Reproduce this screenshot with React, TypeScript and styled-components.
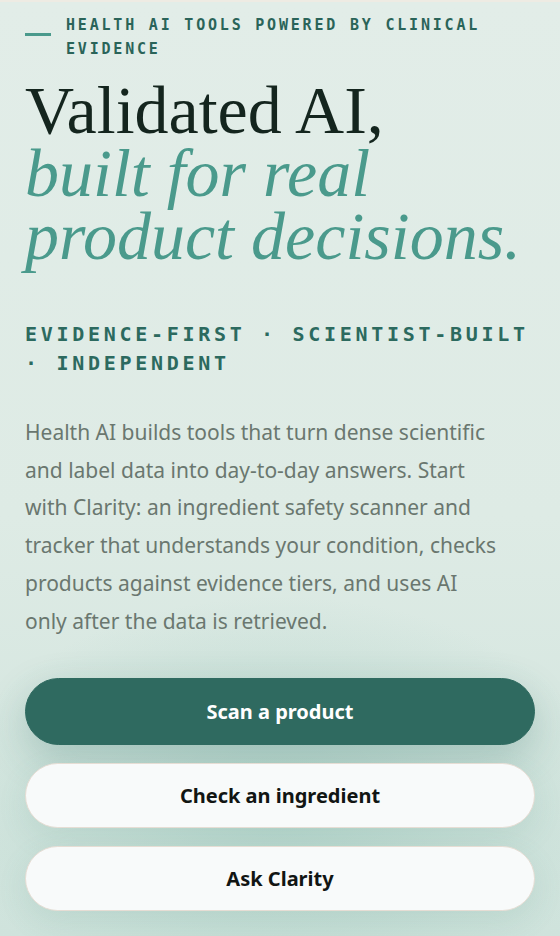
import React from 'react'
import styled, { createGlobalStyle } from 'styled-components'

const GlobalStyle = createGlobalStyle`
  html, body {
    margin: 0;
    padding: 0;
  }
  body {
    background: #e1ede7;
    font-family: 'Noto Sans', 'Liberation Sans', sans-serif;
  }
`

const App = () => {
	return (
		<>
			<GlobalStyle />
			<Page>
				<Eyebrow>
					<EyebrowLine />
					<EyebrowText>Health AI tools powered by clinical evidence</EyebrowText>
				</Eyebrow>

				<Title>
					Validated AI,
					<TitleAccent>built for real product decisions.</TitleAccent>
				</Title>

				<Tagline>Evidence-first · Scientist-built · Independent</Tagline>

				<Lead>
					Health AI builds tools that turn dense scientific and label data into day-to-day answers.
					Start with Clarity: an ingredient safety scanner and tracker that understands your
					condition, checks products against evidence tiers, and uses AI only after the data is
					retrieved.
				</Lead>

				<Actions>
					<Button $primary>Scan a product</Button>
					<Button>Check an ingredient</Button>
					<Button>Ask Clarity</Button>
				</Actions>
			</Page>
		</>
	)
}

export default App

const Page = styled.main`
  min-height: 936px;
  box-sizing: border-box;
  border-top: 2px solid #eeebe3;
  padding: 11px 25px 0;
  background:
    radial-gradient(ellipse 85% 32% at 50% 86%, rgba(120, 180, 165, 0.32), transparent 70%),
    linear-gradient(180deg, #e2ede8 0%, #deebe5 55%, #cfe3dc 100%);
`

const Eyebrow = styled.div`
  display: flex;
  align-items: flex-start;
  gap: 15px;
`

const EyebrowLine = styled.span`
  flex: none;
  width: 26px;
  height: 3px;
  margin-top: 20px;
  background: #4a9a8c;
`

const EyebrowText = styled.p`
  margin: 0;
  font-family: 'DejaVu Sans Mono', 'Liberation Mono', monospace;
  font-weight: 700;
  font-size: 15px;
  line-height: 24px;
  letter-spacing: 2.8px;
  text-transform: uppercase;
  color: #2a6459;
`

const Title = styled.h1`
  margin: 18px 0 0;
  font-family: 'Liberation Serif', 'DejaVu Serif', serif;
  font-weight: 400;
  font-size: 68px;
  line-height: 63px;
  color: #14251e;
`

const TitleAccent = styled.em`
  display: block;
  font-style: italic;
  color: #4a9a8c;
`

const Tagline = styled.p`
  margin: 52px 0 0;
  font-family: 'DejaVu Sans Mono', 'Liberation Mono', monospace;
  font-weight: 700;
  font-size: 20px;
  line-height: 29px;
  letter-spacing: 3.7px;
  text-transform: uppercase;
  color: #2c6a5f;
`

const Lead = styled.p`
  max-width: 475px;
  margin: 36px 0 0;
  font-size: 21px;
  line-height: 37.7px;
  color: #6a776f;
`

const Actions = styled.div`
  display: flex;
  flex-direction: column;
  gap: 18px;
  margin-top: 38px;
`

const Button = styled.button<{ $primary?: boolean }>`
  height: ${p => (p.$primary ? '67px' : '65px')};
  border-radius: 999px;
  border: 1px solid ${p => (p.$primary ? '#2f6a60' : '#e6ddd4')};
  background: ${p => (p.$primary ? '#2f6a60' : '#f8fafa')};
  color: ${p => (p.$primary ? '#ffffff' : '#111513')};
  font-family: 'Noto Sans', 'Liberation Sans', sans-serif;
  font-weight: 700;
  font-size: 20px;
  cursor: pointer;
  box-shadow: ${p =>
		p.$primary
			? '0 14px 40px rgba(47, 106, 96, 0.24)'
			: '0 10px 30px rgba(90, 150, 135, 0.12)'};
`
